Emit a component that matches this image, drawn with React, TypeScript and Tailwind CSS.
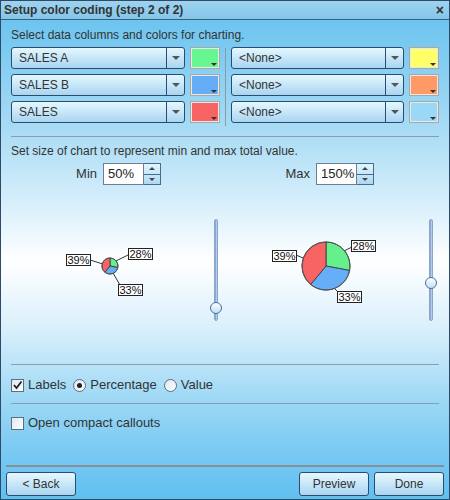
import React from "react";

const font = { fontFamily: '"Liberation Sans", Arial, sans-serif' };

function Combo({ label, width }: { label: string; width: string }) {
  return (
    <div
      className={`${width} h-[22px] flex rounded-[3px] border border-[#2d4b6e] bg-gradient-to-b from-[#e4f8ff] to-[#a9d5f1]`}
    >
      <div className="flex-1 flex items-center pl-[7px] text-[12px] text-[#333]">{label}</div>
      <div className="w-[18px] border-l border-[#2d4b6e] flex items-center justify-center">
        <div className="w-0 h-0 border-l-[4px] border-r-[4px] border-t-[4px] border-l-transparent border-r-transparent border-t-[#555]" />
      </div>
    </div>
  );
}

function Swatch({ color }: { color: string }) {
  return (
    <div className="relative w-[30px] h-[22px] border-2 border-[#e8e8e8] outline outline-1 outline-[#a8a8a8] -outline-offset-1">
      <div className="w-full h-full" style={{ background: color }} />
      <div className="absolute right-[1px] bottom-[1px] w-0 h-0 border-l-[3px] border-r-[3px] border-t-[3px] border-l-transparent border-r-transparent border-t-[#333]" />
    </div>
  );
}

function Spinner({ value }: { value: string }) {
  return (
    <div className="flex h-[22px]">
      <div className="w-[41px] h-full bg-white border border-[#6a7f95] flex items-center pl-[4px] text-[13px] text-[#222]">
        {value}
      </div>
      <div className="w-[17px] h-full border border-l-0 border-[#4a6a8e] flex flex-col bg-gradient-to-b from-[#e0f6ff] to-[#aed8f2]">
        <div className="flex-1 flex items-center justify-center border-b border-[#4a6a8e]">
          <div className="w-0 h-0 border-l-[3px] border-r-[3px] border-b-[3px] border-l-transparent border-r-transparent border-b-[#444]" />
        </div>
        <div className="flex-1 flex items-center justify-center">
          <div className="w-0 h-0 border-l-[3px] border-r-[3px] border-t-[3px] border-l-transparent border-r-transparent border-t-[#444]" />
        </div>
      </div>
    </div>
  );
}

function Slider({ thumbTop }: { thumbTop: string }) {
  return (
    <div className="relative w-[14px] h-[102px]">
      <div className="absolute left-[5px] top-0 w-[4px] h-full rounded-[2px] bg-gradient-to-r from-[#7d98c6] to-[#c9dcf2] border border-[#8aa6cf]" />
      <div
        className={`absolute left-[1px] ${thumbTop} w-[12px] h-[12px] rounded-full border border-[#4d6f9a] bg-gradient-to-b from-[#ffffff] to-[#bfe0f5]`}
      />
    </div>
  );
}

function polar(cx: number, cy: number, r: number, deg: number) {
  const a = ((deg - 90) * Math.PI) / 180;
  return [cx + r * Math.cos(a), cy + r * Math.sin(a)];
}

function slice(cx: number, cy: number, r: number, a0: number, a1: number) {
  const [x0, y0] = polar(cx, cy, r, a0);
  const [x1, y1] = polar(cx, cy, r, a1);
  const large = a1 - a0 > 180 ? 1 : 0;
  return `M${cx},${cy} L${x0},${y0} A${r},${r} 0 ${large} 1 ${x1},${y1} Z`;
}

type Box = { x: number; y: number; text: string; lx: number; ly: number; ax: number; ay: number };

function Pie({ cx, cy, r, boxes, w }: { cx: number; cy: number; r: number; boxes: Box[]; w: number }) {
  const parts = [
    { a0: 0, a1: 100.8, c: "#66f08c" },
    { a0: 100.8, a1: 219.6, c: "#66aef8" },
    { a0: 219.6, a1: 360, c: "#f86464" },
  ];
  return (
    <svg width={w} height={160} className="shrink-0">
      {boxes.map((b, i) => (
        <line key={"l" + i} x1={b.ax} y1={b.ay} x2={b.lx} y2={b.ly} stroke="#333" strokeWidth={1} />
      ))}
      {parts.map((p, i) => (
        <path key={i} d={slice(cx, cy, r, p.a0, p.a1)} fill={p.c} stroke="#333" strokeWidth={0.8} />
      ))}
      <circle cx={cx} cy={cy} r={r} fill="none" stroke="#555" strokeWidth={1} />
      {boxes.map((b, i) => (
        <g key={"b" + i}>
          <rect x={b.x + 0.5} y={b.y + 0.5} width={24} height={11} fill="#fff" stroke="#222" strokeWidth={1} />
          <text x={b.x + 12.5} y={b.y + 10} textAnchor="middle" fontSize={11} fill="#111" style={font}>
            {b.text}
          </text>
        </g>
      ))}
    </svg>
  );
}

function Check({ checked }: { checked?: boolean }) {
  return (
    <div className="w-[13px] h-[13px] border border-[#5a6e86] bg-gradient-to-br from-[#dfe8f0] to-[#ffffff] flex items-center justify-center">
      {checked && (
        <svg width="11" height="11" viewBox="0 0 11 11">
          <path d="M2 5 L4.5 8 L9.5 1.5" fill="none" stroke="#222" strokeWidth={1.8} />
        </svg>
      )}
    </div>
  );
}

function Radio({ checked }: { checked?: boolean }) {
  return (
    <div className="w-[13px] h-[13px] rounded-full border border-[#5a6e86] bg-gradient-to-br from-[#dfe8f0] to-[#ffffff] flex items-center justify-center">
      {checked && <div className="w-[5px] h-[5px] rounded-full bg-[#222]" />}
    </div>
  );
}

function Btn({ label }: { label: string }) {
  return (
    <button className="w-[70px] h-[24px] rounded-[3px] border border-[#2d4b6e] bg-gradient-to-b from-[#e6f8ff] to-[#a9d5f1] text-[12px] text-[#333]">
      {label}
    </button>
  );
}

export default function App() {
  const rows = [
    ["SALES A", "#66f790", "#ffff66"],
    ["SALES B", "#66adf7", "#ff9966"],
    ["SALES", "#f86464", "#99d9f7"],
  ];

  return (
    <div
      className="w-[450px] h-[500px] flex flex-col border border-[#2f4a68] bg-[linear-gradient(to_bottom,#62c0ee_0px,#a9dcf5_130px,#d6eefb_200px,#ffffff_260px,#d8effb_330px,#a4dbf6_390px,#80ccf3_440px,#5fbff0_500px)] overflow-hidden"
      style={font}
    >
      {/* title bar */}
      <div className="h-[19px] shrink-0 flex items-center justify-between px-[3px] border-b border-[#3b5d7e] bg-gradient-to-b from-[#9ed3ee] to-[#84c6ea]">
        <span className="text-[12px] font-bold text-[#333]">Setup color coding (step 2 of 2)</span>
        <span className="text-[14px] font-bold text-[#333] pr-[2px] leading-none">×</span>
      </div>

      <div className="flex-1 flex flex-col px-[10px]">
        <div className="text-[12px] text-[#333] mt-[9px] leading-[13px]">Select data columns and colors for charting.</div>

        <div className="flex mt-[5px]">
          <div className="flex flex-col gap-[5px]">
            {rows.map((r) => (
              <div key={r[0]} className="flex gap-[5px]">
                <Combo label={r[0]} width="w-[174px]" />
                <Swatch color={r[1]} />
              </div>
            ))}
          </div>
          <div className="w-px bg-[#8a9aa8] mx-[5px] my-[1px] h-[78px]" />
          <div className="flex flex-col gap-[5px]">
            {rows.map((r) => (
              <div key={r[0]} className="flex gap-[5px]">
                <Combo label="<None>" width="w-[173px]" />
                <Swatch color={r[2]} />
              </div>
            ))}
          </div>
        </div>

        <div className="h-px bg-[#8c9eae] mt-[9px] w-[428px]" />

        <div className="text-[12px] text-[#333] mt-[8px] leading-[13px]">
          Set size of chart to represent min and max total value.
        </div>

        <div className="flex mt-[5px] h-[22px]">
          <div className="w-[214px] flex items-center justify-end gap-[6px] pr-[64px]">
            <span className="text-[13px] text-[#333]">Min</span>
            <Spinner value="50%" />
          </div>
          <div className="w-[214px] flex items-center justify-end gap-[6px] pr-[65px]">
            <span className="text-[13px] text-[#333]">Max</span>
            <Spinner value="150%" />
          </div>
        </div>

        {/* charts */}
        <div className="flex -mx-[10px] mt-[6px] h-[160px]">
          <div className="flex w-[224px]">
            <Pie
              w={208}
              cx={109}
              cy={75}
              r={8}
              boxes={[
                { x: 127, y: 57, text: "28%", lx: 127, ly: 64, ax: 115, ay: 70 },
                { x: 65, y: 63, text: "39%", lx: 89, ly: 69, ax: 102, ay: 73 },
                { x: 117, y: 93, text: "33%", lx: 119, ly: 94, ax: 112, ay: 82 },
              ]}
            />
            <div className="mt-[28px]">
              <Slider thumbTop="top-[83px]" />
            </div>
          </div>
          <div className="flex w-[224px]">
            <Pie
              w={199}
              cx={101}
              cy={75}
              r={24}
              boxes={[
                { x: 126, y: 49, text: "28%", lx: 127, ly: 56, ax: 119, ay: 60 },
                { x: 47, y: 59, text: "39%", lx: 71, ly: 64, ax: 78, ay: 67 },
                { x: 112, y: 100, text: "33%", lx: 113, ly: 101, ax: 110, ay: 98 },
              ]}
            />
            <div className="mt-[28px]">
              <Slider thumbTop="top-[58px]" />
            </div>
          </div>
        </div>

        <div className="h-px bg-[#8c9eae] mt-[13px] w-[428px]" />

        <div className="flex items-center mt-[13px] h-[14px] text-[13px] text-[#333]">
          <Check checked />
          <span className="ml-[4px]">Labels</span>
          <div className="ml-[7px]">
            <Radio checked />
          </div>
          <span className="ml-[4px]">Percentage</span>
          <div className="ml-[7px]">
            <Radio />
          </div>
          <span className="ml-[4px]">Value</span>
        </div>

        <div className="h-px bg-[#8c9eae] mt-[11px] w-[428px]" />

        <div className="flex items-center mt-[12px] h-[14px] text-[13px] text-[#333]">
          <Check />
          <span className="ml-[4px]">Open compact callouts</span>
        </div>
      </div>

      {/* footer */}
      <div className="shrink-0 px-[5px] pb-[2px]">
        <div className="h-[2px] bg-[#8a8f96]" />
        <div className="flex items-center mt-[5px] mb-[1px]">
          <Btn label="< Back" />
          <div className="flex-1" />
          <Btn label="Preview" />
          <div className="w-[5px]" />
          <Btn label="Done" />
        </div>
      </div>
    </div>
  );
}
